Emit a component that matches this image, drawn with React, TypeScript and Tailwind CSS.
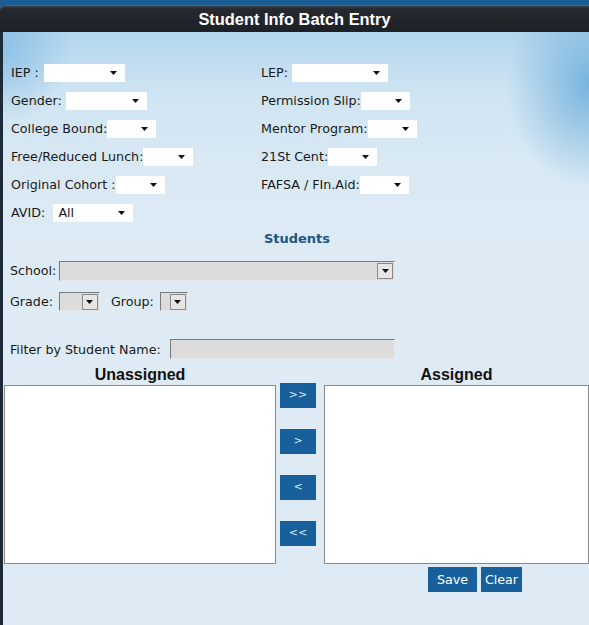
import React from "react";

const font = { fontFamily: '"DejaVu Sans", Verdana, sans-serif' };

function Arrow() {
  return (
    <svg width="7" height="4" viewBox="0 0 7 4" className="block">
      <polygon points="0,0 7,0 3.5,4" fill="#111" />
    </svg>
  );
}

function WSelect({ w, value }: { w: string; value?: string }) {
  return (
    <div className={`${w} h-[18px] bg-white flex items-center justify-between pl-[5px] pr-[8px] text-[12.7px] text-[#111]`}>
      <span>{value ?? ""}</span>
      <Arrow />
    </div>
  );
}

function GSelect({ w, h }: { w: string; h: string }) {
  return (
    <div className={`${w} ${h} bg-[#dcdcdc] border border-t-[#7a7a7a] border-l-[#7a7a7a] border-r-[#e8e8e8] border-b-[#e8e8e8] flex items-center justify-end pr-[1px]`}>
      <div className="w-[16px] h-[16px] bg-[#e6e6e6] border border-[#8a8a8a] flex items-center justify-center">
        <Arrow />
      </div>
    </div>
  );
}

function Row({ label, children }: { label: string; children: React.ReactNode }) {
  return (
    <div className="flex items-center h-[18px]">
      <span className="text-[12.7px] text-[#1a1a1a] whitespace-pre">{label}</span>
      {children}
    </div>
  );
}

function MoveBtn({ t, mt }: { t: string; mt: string }) {
  return (
    <div className={`${mt} w-[36px] h-[25px] bg-[#17609b] text-[#dfe9f3] text-[11px] flex items-center justify-center`}>
      {t}
    </div>
  );
}

export default function App() {
  return (
    <div className="w-[589px] h-[625px] bg-[#1b5e95] pt-[5px] flex flex-col overflow-hidden" style={font}>
      <div className="h-[27px] rounded-tl-[6px] bg-[linear-gradient(to_bottom,#3a4047_0px,#262a30_3px,#1d2126_100%)] border-t border-[#5a6068] flex items-center justify-center">
        <span className="text-white font-bold text-[16.4px]" style={{ fontFamily: '"Liberation Sans", Arial, sans-serif' }}>
          Student Info Batch Entry
        </span>
      </div>
      <div className="flex-1 border-l-[3px] border-[#1d2b38] bg-[#deebf4] relative">
        <div className="absolute left-0 right-0 top-0 h-[260px] bg-[radial-gradient(ellipse_14%_40%_at_100%_20%,#78b4de_0%,rgba(120,180,222,0)_100%),radial-gradient(ellipse_12%_30%_at_0%_5%,#8cc2e6_0%,rgba(140,194,230,0)_100%),linear-gradient(to_bottom,#b3d6ee_0px,#cfe4f2_60px,#d9e9f4_140px,#deebf4_240px)]" />
        <div className="relative pt-[32px]">
          <div className="grid grid-cols-[250px_250px] pl-[8px] gap-y-[10px]">
            <Row label="IEP : "><div className="ml-[1px]"><WSelect w="w-[81px]" /></div></Row>
            <Row label="LEP: "><WSelect w="w-[96px]" /></Row>
            <Row label="Gender: "><WSelect w="w-[81px]" /></Row>
            <Row label="Permission Slip:"><WSelect w="w-[49px]" /></Row>
            <Row label="College Bound:"><WSelect w="w-[49px]" /></Row>
            <Row label="Mentor Program:"><WSelect w="w-[49px]" /></Row>
            <Row label="Free/Reduced Lunch:"><WSelect w="w-[50px]" /></Row>
            <Row label="21St Cent:"><WSelect w="w-[49px]" /></Row>
            <Row label="Original Cohort :"><WSelect w="w-[49px]" /></Row>
            <Row label="FAFSA / FIn.Aid:"><WSelect w="w-[49px]" /></Row>
            <Row label="AVID:  "><WSelect w="w-[80px]" value="All" /></Row>
          </div>
          <div className="mt-[9px] h-[16px] flex items-center justify-center pl-[2px] text-[13px] font-bold text-[#1d5682]">
            Students
          </div>
          <div className="mt-[14px] pl-[7px] flex items-center">
            <span className="text-[12.7px] text-[#1a1a1a] mr-[3px]">School:</span>
            <GSelect w="w-[336px]" h="h-[20px]" />
          </div>
          <div className="mt-[11px] pl-[7px] flex items-center">
            <span className="text-[12.7px] text-[#1a1a1a] mr-[6px]">Grade:</span>
            <GSelect w="w-[41px]" h="h-[19px]" />
            <span className="text-[12.7px] text-[#1a1a1a] ml-[11px] mr-[6px]">Group:</span>
            <GSelect w="w-[28px]" h="h-[19px]" />
          </div>
          <div className="mt-[28px] pl-[7px] flex items-center">
            <span className="text-[12.7px] text-[#1a1a1a] mr-[9px]">Filter by Student Name:</span>
            <div className="w-[225px] h-[20px] bg-[#dcdcdc] border border-t-[#7a7a7a] border-l-[#7a7a7a] border-r-[#e8e8e8] border-b-[#e8e8e8]" />
          </div>
          <div className="mt-[6px] flex">
            <div className="ml-[1px] w-[272px] flex flex-col">
              <div className="h-[20px] flex items-center justify-center text-[16px] font-bold text-[#111]" style={{ fontFamily: '"Liberation Sans", Arial, sans-serif' }}>
                Unassigned
              </div>
              <div className="h-[179px] bg-white border border-[#8a8a8a]" />
            </div>
            <div className="ml-[4px] w-[36px] flex flex-col pt-[18px]">
              <MoveBtn t=">>" mt="mt-0" />
              <MoveBtn t=">" mt="mt-[21px]" />
              <MoveBtn t="<" mt="mt-[21px]" />
              <MoveBtn t="<<" mt="mt-[21px]" />
            </div>
            <div className="ml-[8px] w-[265px] flex flex-col">
              <div className="h-[20px] flex items-center justify-center text-[16px] font-bold text-[#111]" style={{ fontFamily: '"Liberation Sans", Arial, sans-serif' }}>
                Assigned
              </div>
              <div className="h-[179px] bg-white border border-[#8a8a8a]" />
              <div className="mt-[3px] flex pl-[104px] gap-[4px]">
                <div className="w-[49px] h-[25px] bg-[#17609b] text-white text-[12.7px] flex items-center justify-center">Save</div>
                <div className="w-[41px] h-[25px] bg-[#17609b] text-white text-[12.7px] flex items-center justify-center">Clear</div>
              </div>
            </div>
          </div>
        </div>
      </div>
    </div>
  );
}
